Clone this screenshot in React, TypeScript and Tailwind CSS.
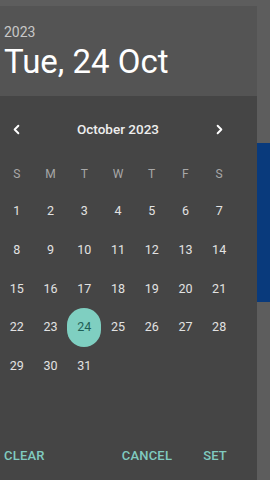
import { ChevronLeft, ChevronRight } from 'lucide-react';

const weekdays = ['S', 'M', 'T', 'W', 'T', 'F', 'S'];

// October 2023 starts on a Sunday
const weeks: (number | null)[][] = [
  [1, 2, 3, 4, 5, 6, 7],
  [8, 9, 10, 11, 12, 13, 14],
  [15, 16, 17, 18, 19, 20, 21],
  [22, 23, 24, 25, 26, 27, 28],
  [29, 30, 31, null, null, null, null],
];

const selected = 24;

const App = () => {
  return (
    <div className="h-[480px] w-[270px] overflow-hidden bg-[#5d5d5d] flex font-['Roboto',sans-serif]">
      {/* Date picker dialog */}
      <div className="mt-[6px] w-[257px] h-[474px] flex flex-col shrink-0">
        {/* Header */}
        <div className="h-[90px] bg-[#545454] px-[4px] pt-[18px] flex flex-col">
          <span className="text-[14px] leading-[16px] text-[#c8c8c8]">2023</span>
          <span className="mt-[5px] text-[33px] leading-[34px] text-white">Tue, 24 Oct</span>
        </div>

        {/* Body */}
        <div className="flex-1 bg-[#454545] flex flex-col">
          <div className="mt-[20px] h-[26px] w-[236px] flex items-center justify-between px-[9px]">
            <ChevronLeft size={15} strokeWidth={3} className="text-white" />
            <span className="text-[13.5px] font-medium text-[#eeeeee]">October 2023</span>
            <ChevronRight size={15} strokeWidth={3} className="text-white" />
          </div>

          <div className="mt-[14px] w-[236px] h-[36px] grid grid-cols-7 items-center">
            {weekdays.map((d, i) => (
              <span key={i} className="text-center text-[12px] text-[#a8a8a8]">
                {d}
              </span>
            ))}
          </div>

          <div className="w-[236px] flex flex-col">
            {weeks.map((week, wi) => (
              <div key={wi} className="h-[38.75px] grid grid-cols-7 items-center">
                {week.map((day, di) => (
                  <div key={di} className="flex items-center justify-center">
                    {day === selected ? (
                      <span className="w-[39px] h-[39px] rounded-full bg-[#7fcfc1] flex items-center justify-center text-[12.5px] text-[#1f5f56]">
                        {day}
                      </span>
                    ) : (
                      <span className="text-[12.5px] text-[#e2e2e2]">{day}</span>
                    )}
                  </div>
                ))}
              </div>
            ))}
          </div>

          <div className="mt-auto mb-[15px] flex items-center text-[13px] font-medium tracking-[0.2px] text-[#80cbc0]">
            <span className="pl-[4px]">CLEAR</span>
            <span className="ml-auto">CANCEL</span>
            <span className="ml-[31px] mr-[30px]">SET</span>
          </div>
        </div>
      </div>

      {/* Page behind the dialog */}
      <div className="flex-1 flex flex-col">
        <div className="mt-[143px] h-[159px] bg-[#093a7c]" />
      </div>
    </div>
  );
};

export default App;
